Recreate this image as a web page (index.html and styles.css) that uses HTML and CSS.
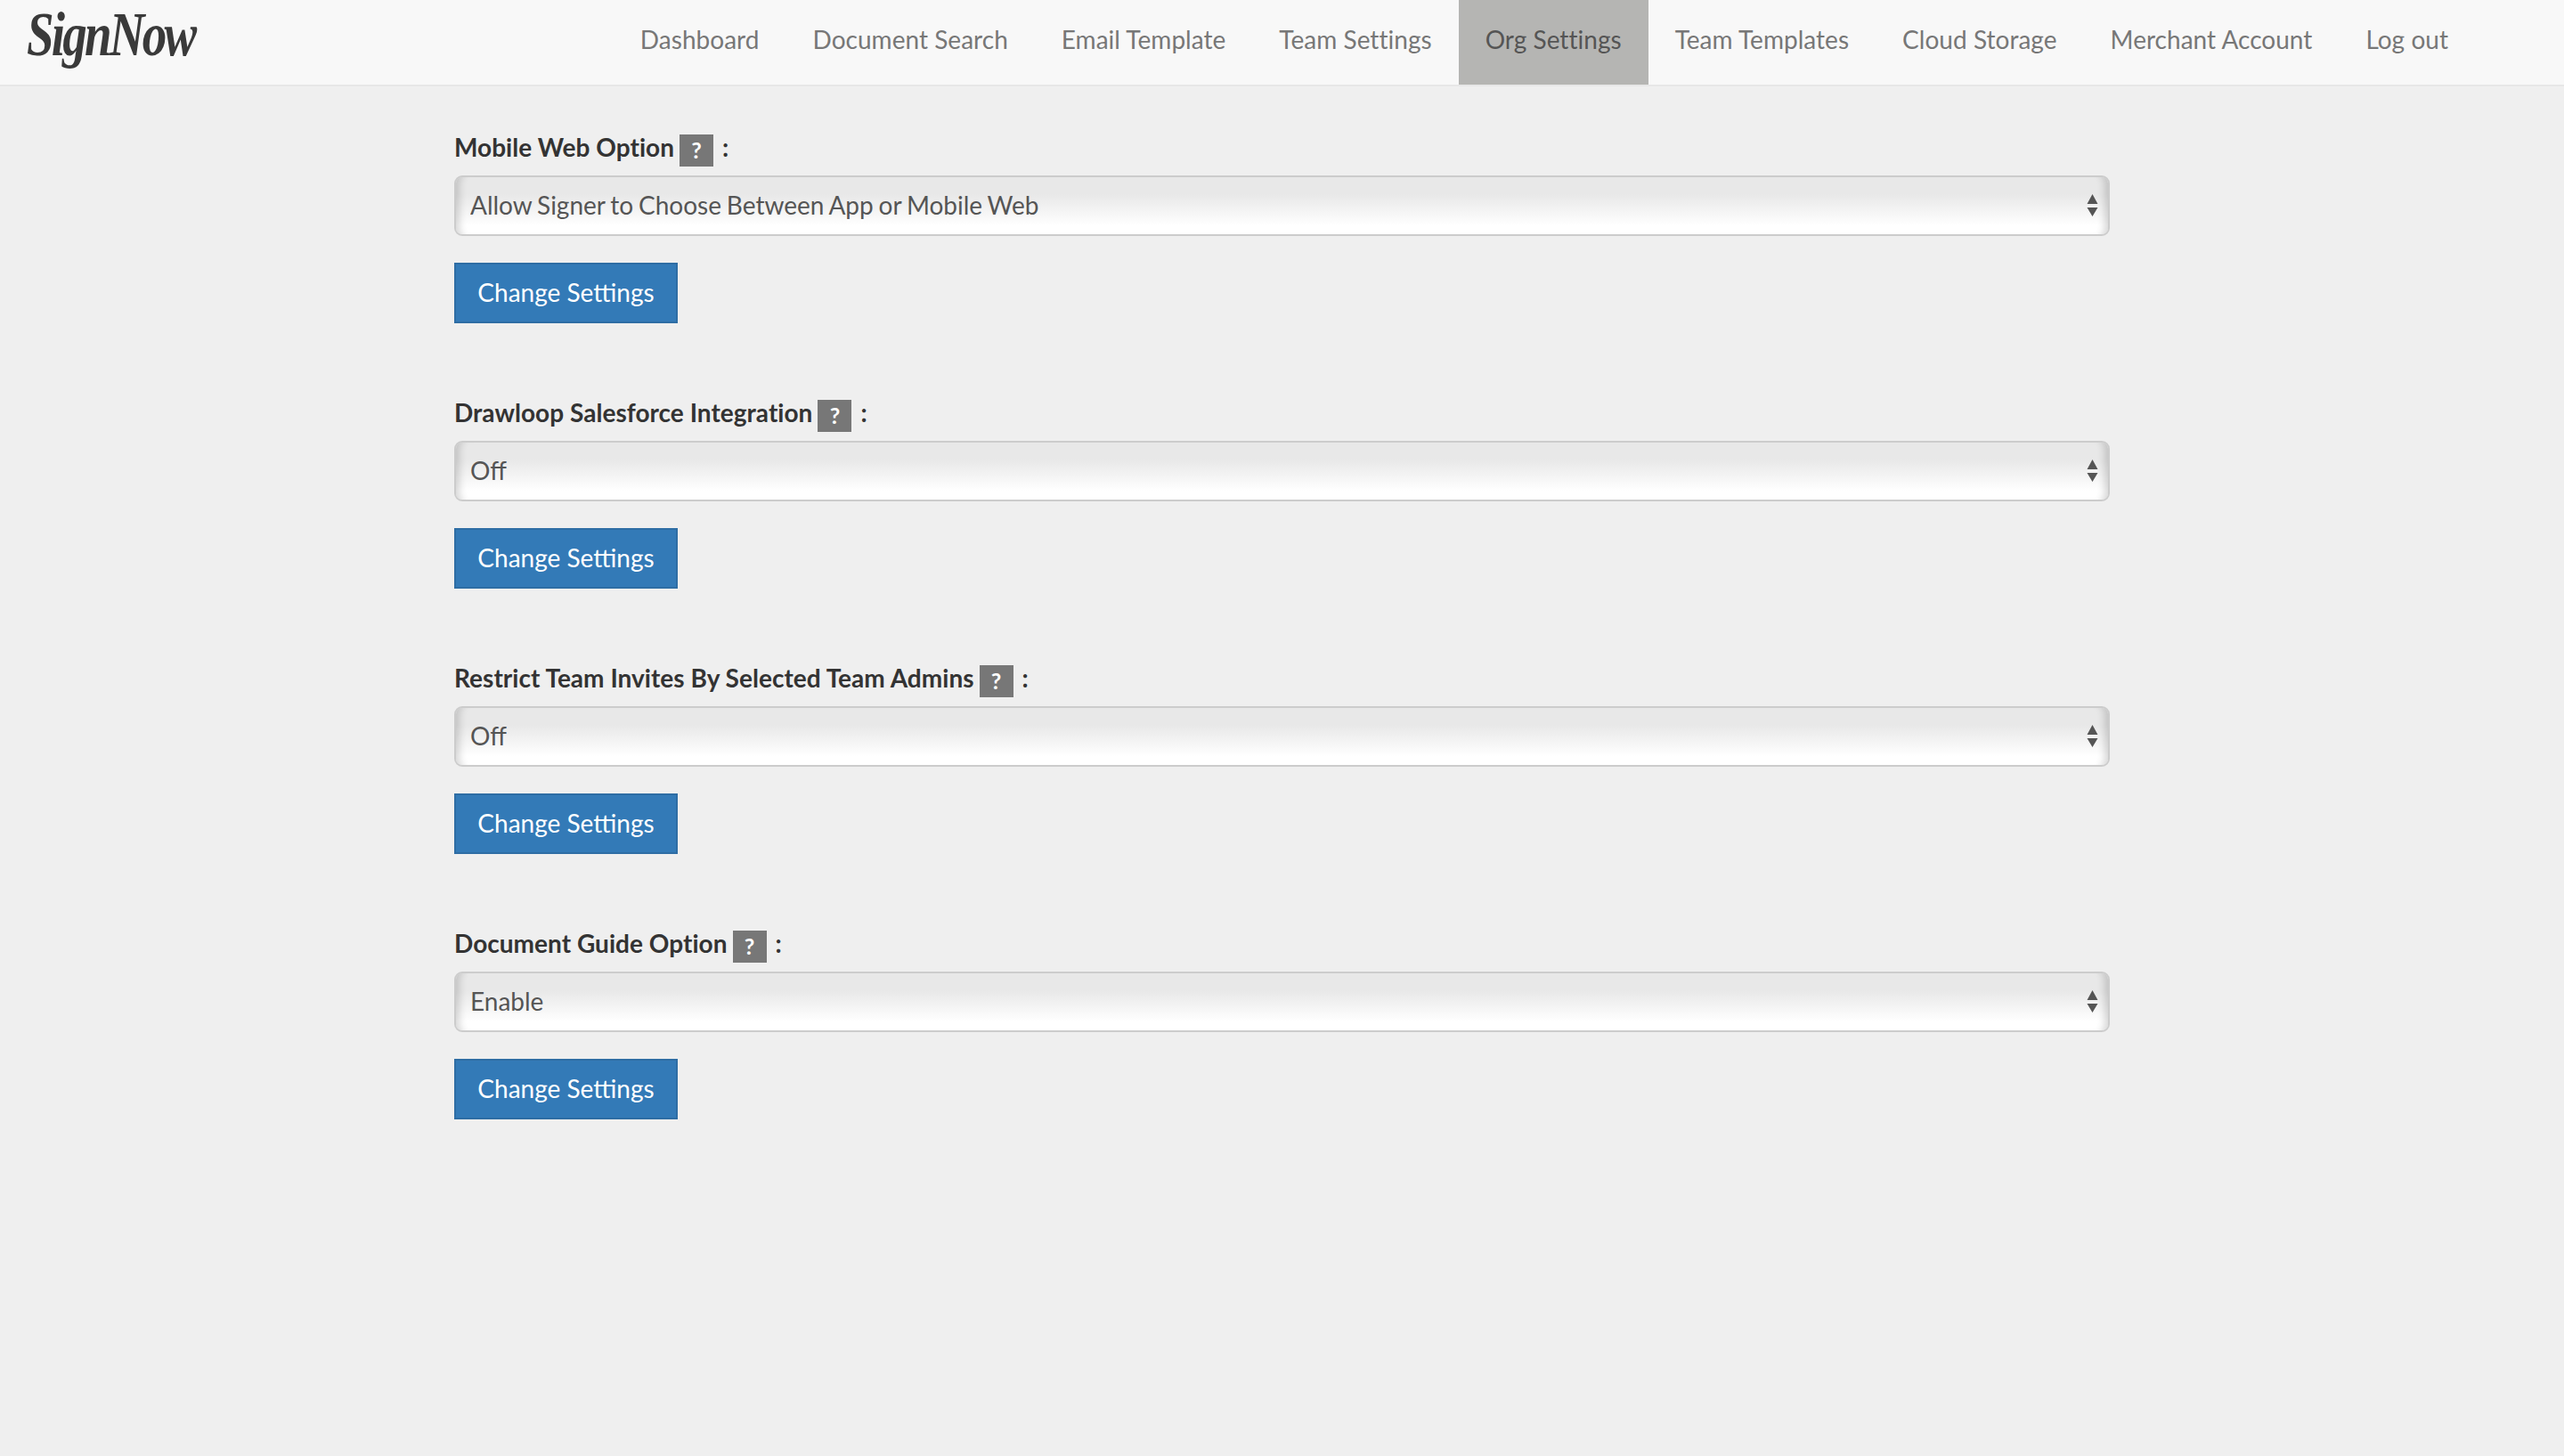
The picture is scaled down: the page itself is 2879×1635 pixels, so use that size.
FILE: index.html
```html
<!DOCTYPE html>
<html lang="en">
<head>
<meta charset="utf-8">
<title>Org Settings</title>
<link rel="stylesheet" href="styles.css">
</head>
<body>
<nav class="navbar">
  <a class="brand" href="#">SignNow</a>
  <ul class="nav">
    <li><a href="#">Dashboard</a></li>
    <li><a href="#">Document Search</a></li>
    <li><a href="#">Email Template</a></li>
    <li><a href="#">Team Settings</a></li>
    <li class="active"><a href="#">Org Settings</a></li>
    <li><a href="#">Team Templates</a></li>
    <li><a href="#">Cloud Storage</a></li>
    <li><a href="#">Merchant Account</a></li>
    <li><a href="#">Log out</a></li>
  </ul>
</nav>
<main class="content">
  <form class="setting">
    <div class="label">Mobile Web Option <span class="help">?</span> <span class="colon">:</span></div>
    <div class="select-wrap">
      <select class="select"><option>Allow Signer to Choose Between App or Mobile Web</option></select>
      <svg class="arrows" viewBox="0 0 13 25" aria-hidden="true"><path d="M6.5 0l6 11H.5zM6.5 25L.5 15h12z"/></svg>
    </div>
    <button class="btn" type="button">Change Settings</button>
  </form>
  <form class="setting">
    <div class="label">Drawloop Salesforce Integration <span class="help">?</span> <span class="colon">:</span></div>
    <div class="select-wrap">
      <select class="select"><option>Off</option></select>
      <svg class="arrows" viewBox="0 0 13 25" aria-hidden="true"><path d="M6.5 0l6 11H.5zM6.5 25L.5 15h12z"/></svg>
    </div>
    <button class="btn" type="button">Change Settings</button>
  </form>
  <form class="setting">
    <div class="label">Restrict Team Invites By Selected Team Admins <span class="help">?</span> <span class="colon">:</span></div>
    <div class="select-wrap">
      <select class="select"><option>Off</option></select>
      <svg class="arrows" viewBox="0 0 13 25" aria-hidden="true"><path d="M6.5 0l6 11H.5zM6.5 25L.5 15h12z"/></svg>
    </div>
    <button class="btn" type="button">Change Settings</button>
  </form>
  <form class="setting">
    <div class="label">Document Guide Option <span class="help">?</span> <span class="colon">:</span></div>
    <div class="select-wrap">
      <select class="select"><option>Enable</option></select>
      <svg class="arrows" viewBox="0 0 13 25" aria-hidden="true"><path d="M6.5 0l6 11H.5zM6.5 25L.5 15h12z"/></svg>
    </div>
    <button class="btn" type="button">Change Settings</button>
  </form>
</main>
</body>
</html>
```
FILE: styles.css
```css
* { box-sizing: border-box; }
html, body { margin: 0; height: 100%; }
body {
  background: #efefef;
  font-family: Lato, "Open Sans", sans-serif;
  font-size: 28px;
  color: #333;
  overflow: hidden;
}
a { text-decoration: none; color: inherit; }
.navbar {
  display: flex;
  justify-content: space-between;
  height: 97px;
  background: #f8f8f8;
  border-bottom: 2px solid #e7e7e7;
  padding-right: 100px;
}
.brand {
  display: block;
  width: 300px;
  padding: 0 0 0 30px;
  font-family: "Liberation Serif", serif;
  font-style: italic;
  font-weight: 700;
  font-size: 70px;
  line-height: 78px;
  letter-spacing: -3.5px;
  color: #3a3a3a;
  transform: scaleX(.785);
  transform-origin: 30px 0;
}
.nav {
  display: flex;
  list-style: none;
  margin: 0;
  padding: 0;
}
.nav a {
  display: block;
  height: 95px;
  padding: 0 30px;
  line-height: 89px;
  letter-spacing: .03px;
  color: #777;
}
.nav .active a {
  background: #b5b5b3;
  color: #555;
}
.content {
  padding: 49px 0 0;
  margin-left: 510px;
}
.setting {
  height: 298px;
  width: 1859px;
}
.label {
  display: flex;
  align-items: center;
  gap: 6px;
  height: 51px;
  padding-bottom: 13px;
  font-weight: 700;
  letter-spacing: .03px;
  color: #333;
}
.help {
  display: block;
  width: 38px;
  height: 36px;
  margin-top: 8px;
  background: #777;
  color: #fff;
  font-size: 25px;
  line-height: 34px;
  text-align: center;
}
.colon { margin-left: 4px; }
.select-wrap {
  position: relative;
  height: 68px;
}
.select {
  display: block;
  width: 100%;
  height: 68px;
  appearance: none;
  border: 2px solid #ccc;
  border-radius: 9px;
  padding: 0 16px 3px;
  background: linear-gradient(#e8e8e8 0%, #e8e8e8 30%, #fff 85%, #fff 100%);
  box-shadow: inset 12px 0 8px -8px rgba(0,0,0,.16), inset -12px 0 8px -8px rgba(0,0,0,.16);
  font-family: inherit;
  font-size: 28px;
  word-spacing: -1.3px;
  color: #555;
}
.arrows {
  position: absolute;
  right: 13px;
  top: 21px;
  width: 13px;
  height: 25px;
  fill: #555;
}
.btn {
  display: block;
  margin-top: 30px;
  height: 68px;
  width: 251px;
  padding: 0 0 3px;
  border: 2px solid #2e6da4;
  border-radius: 0;
  background: #337ab7;
  color: #fff;
  font-family: inherit;
  font-size: 28px;
}
```
